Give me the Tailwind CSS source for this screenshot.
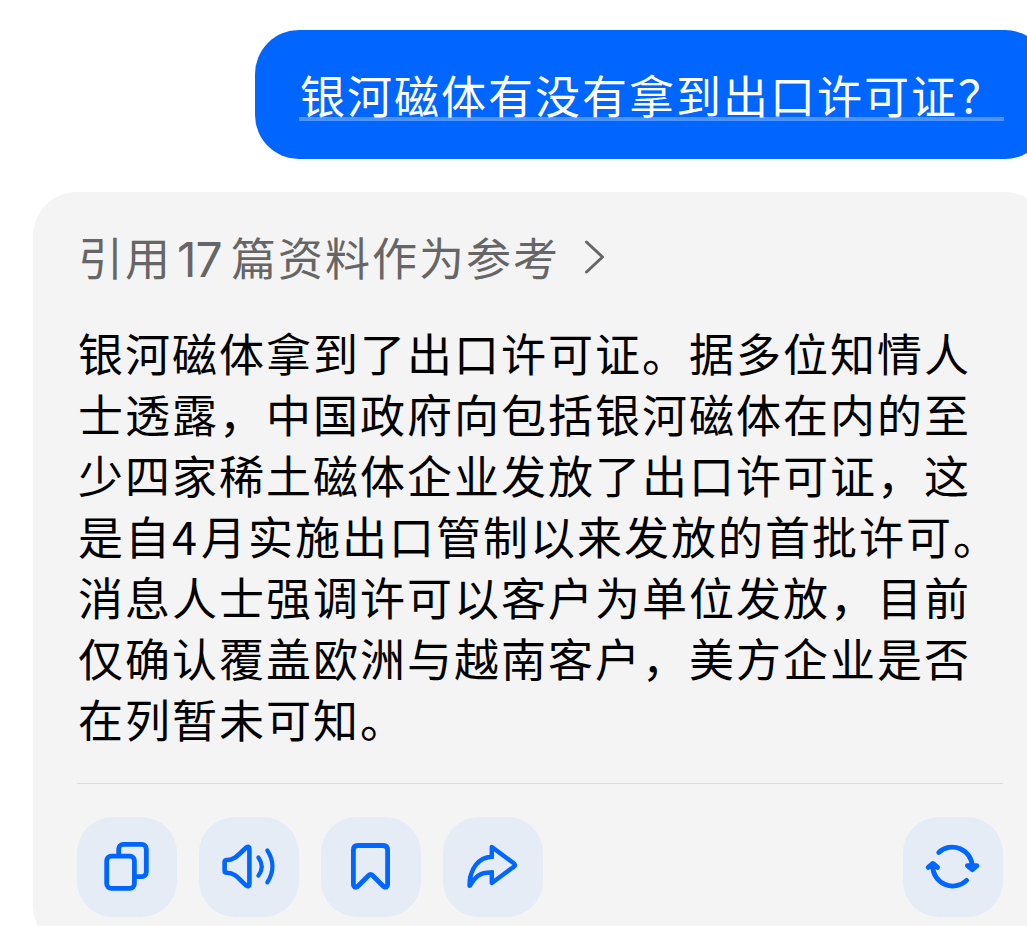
<!DOCTYPE html>
<html lang="zh-CN">
<head>
    <meta charset="UTF-8">
    <meta name="viewport" content="width=device-width, initial-scale=1.0">
    <title>银河磁体有没有拿到出口许可证？</title>
    <script src="https://cdn.jsdelivr.net/npm/@tailwindcss/browser@4"></script>
</head>
<body class="bg-white h-screen overflow-hidden font-['Noto_Sans_CJK_SC',sans-serif] text-[45px] tracking-[2px]">
    <main class="w-[1049px] pt-[30px] pl-[33px] flex flex-col">
        <!-- Pregunta -->
        <div class="self-end w-[794px] h-[129px] rounded-[44px] bg-[#0066ff] pl-11 pt-[34px]">
            <p class="w-[705px] h-[57px] leading-[61px] border-b-4 border-[#4d94ff] text-white whitespace-nowrap indent-px">银河磁体有没有拿到出口许可证？</p>
        </div>

        <!-- Respuesta -->
        <section class="mt-[33px] h-[758px] rounded-[44px] bg-[#f4f4f4] pl-[44px] pr-[46px] pt-[34px]">
            <div class="flex items-center h-[61px] pl-px text-[#666666] whitespace-nowrap">
                <span>引用</span>
                <span class="w-[59px] pt-[6px] pl-[5px] tracking-[-1px] font-['Inter',sans-serif] text-[48px]">17</span>
                <span>篇资料作为参考</span>
                <svg class="ml-6 w-6 h-9" viewBox="0 0 24 36" fill="none" stroke="#666666" stroke-width="3" stroke-linecap="round" stroke-linejoin="round">
                    <path d="M2.5 3 18.5 18 2.5 33"/>
                </svg>
            </div>

            <div class="mt-[35px] pl-px leading-[61px] text-black whitespace-nowrap">
                <p>银河磁体拿到了出口许可证。据多位知情人</p>
                <p>士透露，中国政府向包括银河磁体在内的至</p>
                <p>少四家稀土磁体企业发放了出口许可证，这</p>
                <p>是自<span class="inline-block w-[29px]">4</span>月实施出口管制以来发放的首批许可。</p>
                <p>消息人士强调许可以客户为单位发放，目前</p>
                <p>仅确认覆盖欧洲与越南客户，美方企业是否</p>
                <p>在列暂未可知。</p>
            </div>

            <div class="mt-[34px] border-t border-[#dcdcdc] pt-[33px] flex gap-[22px]">
                <button class="size-[100px] rounded-[36px] bg-[#e5ecf6]">
                    <svg viewBox="0 0 100 100" fill="none" stroke="#0066ff" stroke-width="4.8" stroke-linecap="butt" stroke-linejoin="round">
                        <rect x="29.7" y="39.1" width="27.7" height="32.2" rx="4.6"/>
                        <path d="M41.7 39V32a4.6 4.6 0 0 1 4.6-4.6H64.7a4.6 4.6 0 0 1 4.6 4.6V55a4.6 4.6 0 0 1-4.6 4.6H58"/>
                    </svg>
                </button>
                <button class="size-[100px] rounded-[36px] bg-[#e5ecf6]">
                    <svg viewBox="0 0 100 100" fill="none" stroke="#0066ff" stroke-width="4.6" stroke-linecap="round" stroke-linejoin="round">
                        <path d="M28 43C36 43 39.5 37.5 47 30.7Q50.4 28.3 50.4 32V67Q50.4 70.8 47 68.3C39.5 61.5 36 55.8 28 55.8Q25.6 55.8 25.6 53.5V45.3Q25.6 43 28 43Z"/>
                        <path stroke-width="4.2" d="M59.4 40.4Q66 49.4 59.4 58.6M68.3 33.4Q78.6 49.4 68.3 65.4"/>
                    </svg>
                </button>
                <button class="size-[100px] rounded-[36px] bg-[#e5ecf6]">
                    <svg viewBox="0 0 100 100" fill="none" stroke="#0066ff" stroke-width="4.8" stroke-linecap="round" stroke-linejoin="round">
                        <path d="M37 28.5H62Q66.6 28.5 66.6 33.1V67.5Q66.6 71.5 62.6 69.5L51.6 58.5Q49.6 56.5 47.6 58.5L36.6 69.5Q32.4 71.5 32.4 67.5V33.1Q32.4 28.5 37 28.5Z"/>
                    </svg>
                </button>
                <button class="size-[100px] rounded-[36px] bg-[#e5ecf6]">
                    <svg viewBox="0 0 100 100" fill="none" stroke="#0066ff" stroke-width="4.4" stroke-linecap="round" stroke-linejoin="miter">
                        <path stroke-linejoin="round" d="M48.8 39.7V30L70.8 46.2Q73.2 48 70.8 49.8L48.8 66V55.5"/>
                        <path stroke-linecap="square" d="M48.6 39.7C36 40.5 26.5 50.5 26.5 69.5C32.5 58.5 37.5 55.3 48.6 55.5"/>
                        <path stroke-width="3" d="M26.4 60V69.6"/>
                    </svg>
                </button>
                <button class="ml-auto size-[100px] rounded-[36px] bg-[#e5ecf6]">
                    <svg viewBox="0 0 100 100" fill="none" stroke="#0066ff" stroke-width="4.8" stroke-linecap="round" stroke-linejoin="round">
                        <path d="M35.7 35.4A20 20 0 0 1 69.3 49.8V52.4M64.4 48.7 69.3 52.7 74 48.7Z"/>
                        <path d="M63.6 63.4A20 20 0 0 1 29.7 49.6V46.6M25.2 50.4 29.9 46.4 34.6 50.4"/>
                    </svg>
                </button>
            </div>
        </section>
    </main>
</body>
</html>
